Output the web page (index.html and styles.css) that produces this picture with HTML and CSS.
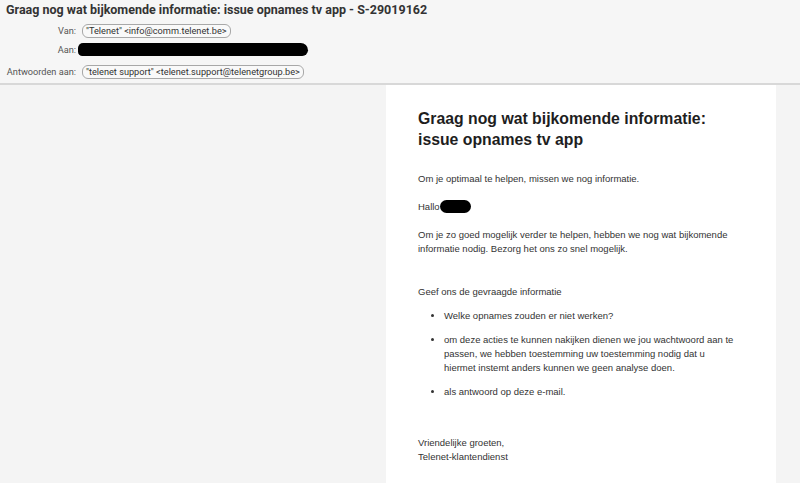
FILE: index.html
```html
<!DOCTYPE html>
<html lang="nl">
<head>
    <meta charset="UTF-8">
    <title>Graag nog wat bijkomende informatie</title>
    <link rel="stylesheet" href="styles.css">
</head>
<body>
    <header class="mail-header">
        <h1 class="subject">Graag nog wat bijkomende informatie: issue opnames tv app - S-29019162</h1>
        <div class="meta-row">
            <span class="meta-label">Van:</span>
            <span class="pill">"Telenet" &lt;info@comm.telenet.be&gt;</span>
        </div>
        <div class="meta-row">
            <span class="meta-label">Aan:</span>
            <span class="redact redact-to"></span>
        </div>
        <div class="meta-row">
            <span class="meta-label">Antwoorden aan:</span>
            <span class="pill">"telenet support" &lt;telenet.support@telenetgroup.be&gt;</span>
        </div>
    </header>

    <main class="mail-body">
        <div class="card">
            <h2 class="title">Graag nog wat bijkomende informatie: issue opnames tv app</h2>
            <p class="intro">Om je optimaal te helpen, missen we nog informatie.</p>
            <p class="greet">Hallo<span class="redact redact-name"></span></p>
            <p>Om je zo goed mogelijk verder te helpen, hebben we nog wat bijkomende informatie nodig. Bezorg het ons zo snel mogelijk.</p>
            <p class="ask">Geef ons de gevraagde informatie</p>
            <ul class="questions">
                <li>Welke opnames zouden er niet werken?</li>
                <li>om deze acties te kunnen nakijken dienen we jou wachtwoord aan te passen, we hebben toestemming uw toestemming nodig dat u hiermet instemt anders kunnen we geen analyse doen.</li>
                <li>als antwoord op deze e-mail.</li>
            </ul>
            <p class="signoff">Vriendelijke groeten,<br>Telenet-klantendienst</p>
        </div>
    </main>
</body>
</html>
```

FILE: styles.css
```css
* {
    margin: 0;
    padding: 0;
    box-sizing: border-box;
}

body {
    background-color: #f4f4f4;
    font-family: Roboto, 'Liberation Sans', sans-serif;
    color: #333;
    height: 483px;
    overflow: hidden;
}

.mail-header {
    background-color: #f6f6f6;
    border-bottom: 2px solid #d8d8d8;
    height: 85px;
    padding: 2px 0 0 6px;
}

.subject {
    font-size: 12.5px;
    font-weight: bold;
    color: #333;
    line-height: 15px;
    margin-bottom: 4px;
}

.meta-row {
    display: flex;
    align-items: center;
    height: 19px;
    font-size: 9.2px;
}

.meta-row:last-child {
    margin-top: 3px;
}

.meta-label {
    width: 70px;
    text-align: right;
    color: #555;
    margin-right: 6px;
    white-space: nowrap;
}

.pill {
    border: 1px solid #a8a8a8;
    border-radius: 6px;
    background-color: #f9f9f9;
    padding: 0 3px;
    line-height: 12px;
    color: #333;
    white-space: nowrap;
}

.redact {
    display: inline-block;
    background-color: #000;
}

.redact-to {
    width: 230px;
    height: 13px;
    border-radius: 7px 10px 8px 6px;
    margin-left: -4px;
}

.redact-name {
    width: 31px;
    height: 13px;
    border-radius: 7px;
    vertical-align: -3px;
}

.mail-body {
    padding-left: 386px;
}

.card {
    background-color: #fff;
    width: 390px;
    min-height: 400px;
    padding: 23px 32px 0 32px;
    font-family: 'Liberation Sans', Arial, sans-serif;
    font-size: 9.5px;
    line-height: 14px;
    color: #333;
}

.title {
    font-size: 15.8px;
    line-height: 21px;
    font-weight: bold;
    color: #1e1e1e;
    margin-bottom: 22px;
    width: 300px;
}

.card p {
    margin-bottom: 14px;
}

.card .ask {
    margin-top: 29px;
    margin-bottom: 10px;
}

.questions {
    padding-left: 26px;
    padding-right: 6px;
}

.questions li {
    margin-bottom: 10px;
}

.card .signoff {
    margin-top: 37px;
}
```
